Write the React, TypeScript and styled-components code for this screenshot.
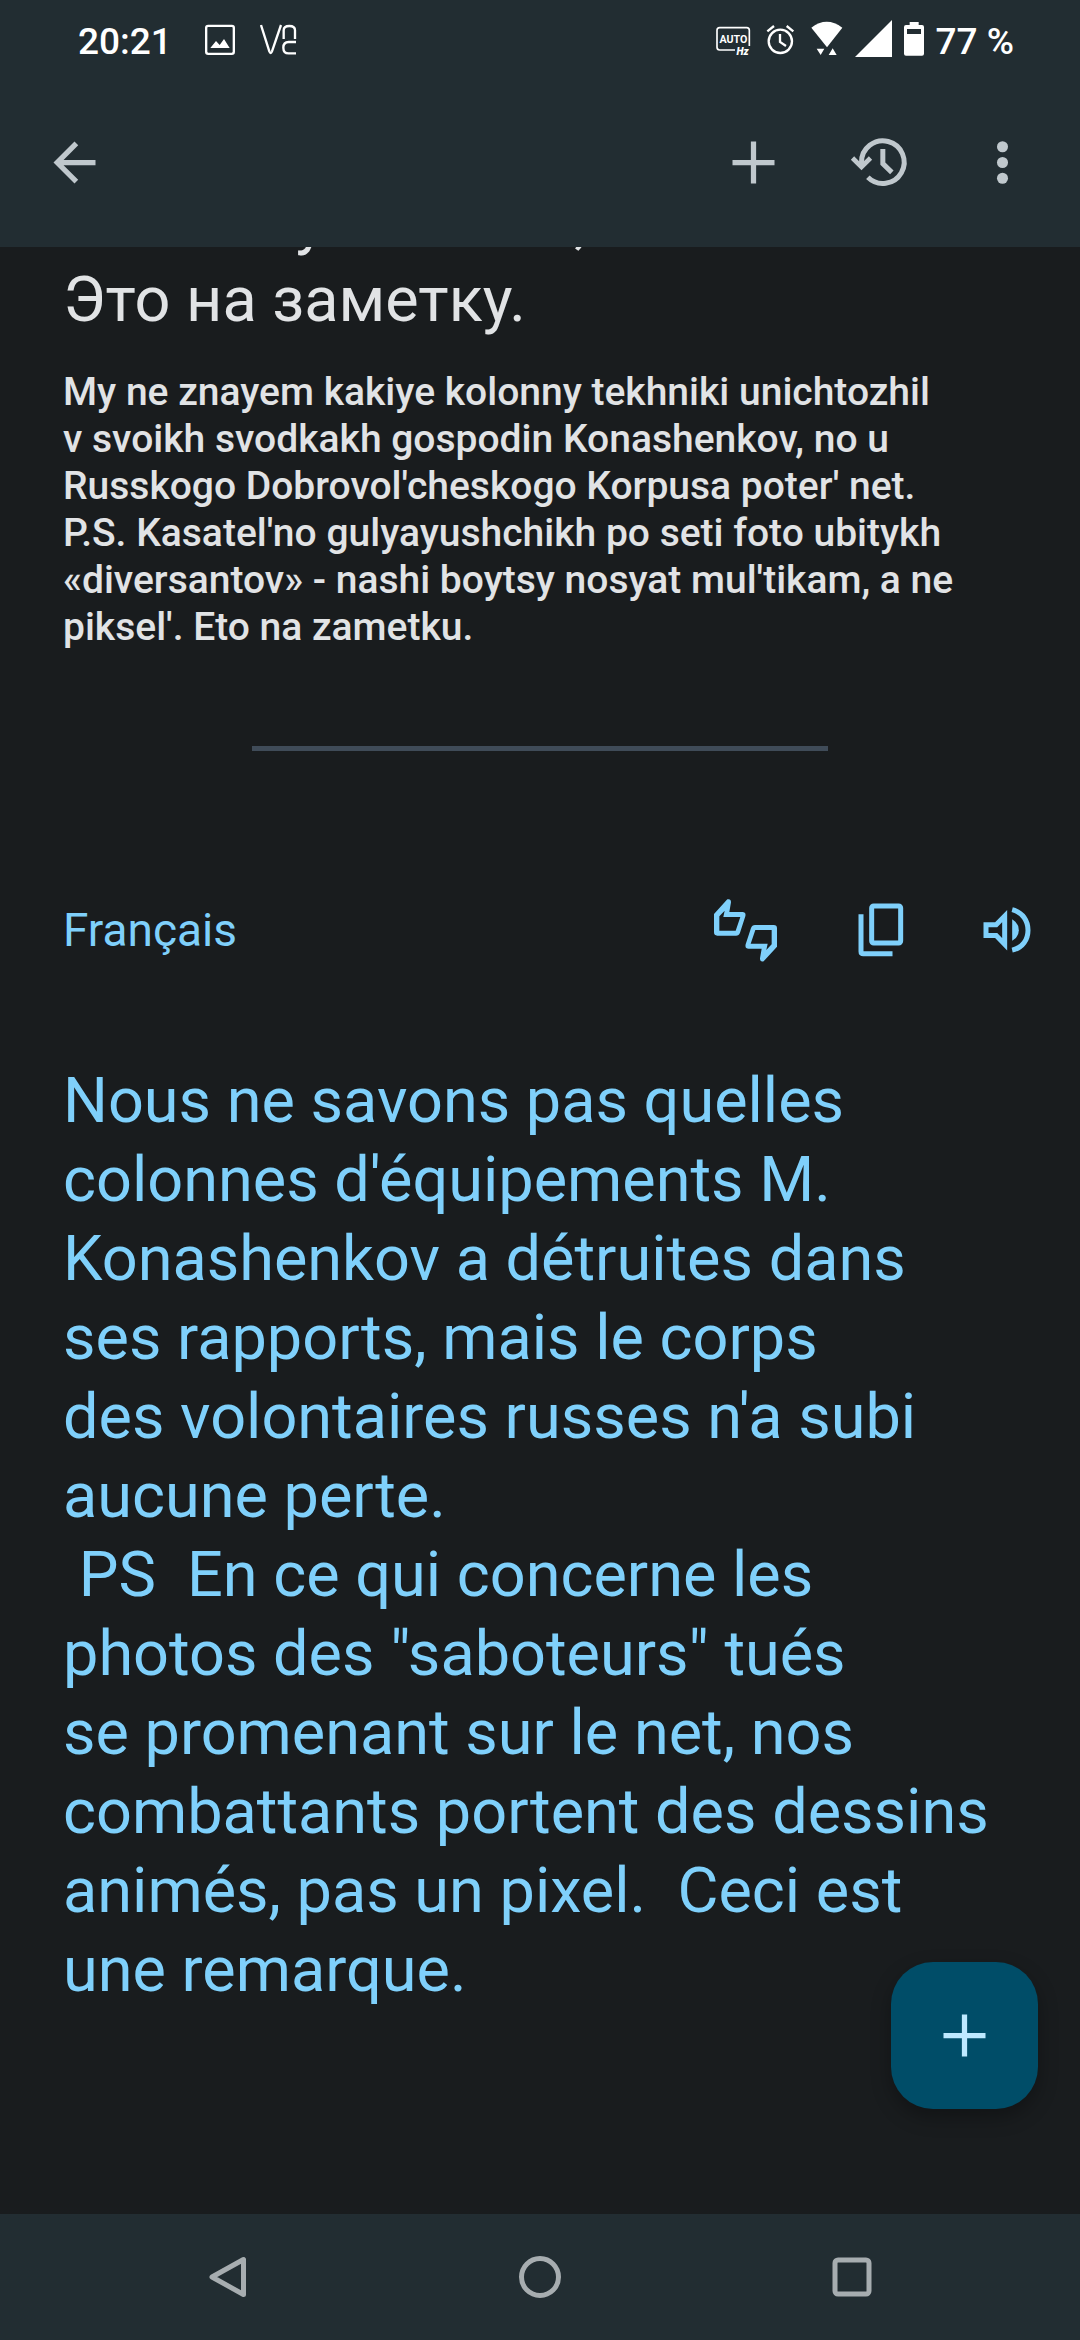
import React from "react";
import styled, { createGlobalStyle } from "styled-components";

const colors = {
  bar: "#222d32",
  page: "#191c1e",
  text: "#e1e3e5",
  icon: "#c0c8cd",
  accent: "#7fd0fb",
  divider: "#3f4b58",
  fab: "#004d68",
  fabIcon: "#bee9ff",
  nav: "#a7adb0",
  status: "#ffffff",
};

const GlobalStyle = createGlobalStyle`
  * { box-sizing: border-box; }
  body {
    margin: 0;
    background: ${colors.page};
    font-family: Roboto, "Noto Sans", sans-serif;
  }
`;

const Screen = styled.div`
  display: flex;
  flex-direction: column;
  min-height: 100vh;
  background: ${colors.page};
  color: ${colors.text};
`;

const Header = styled.header`
  position: sticky;
  top: 0;
  z-index: 1;
  padding-bottom: 6px;
  background: ${colors.bar};
`;

const StatusBar = styled.div`
  display: flex;
  align-items: center;
  justify-content: space-between;
  height: 83px;
  padding: 0 66px 0 78px;
  color: ${colors.status};
  font-size: 37px;
  font-weight: 500;
  line-height: 44px;
`;

const StatusGroup = styled.div<{ $gap: number }>`
  display: flex;
  align-items: center;
  gap: ${(p) => p.$gap}px;
`;

const StatusTime = styled.time`
  margin-right: 8px;
`;

const Toolbar = styled.div`
  display: flex;
  align-items: center;
  justify-content: space-between;
  height: 158px;
  padding: 0 18px 0 11px;
`;

const ButtonGroup = styled.div`
  display: flex;
  align-items: center;
`;

const IconButton = styled.button<{ $width?: number }>`
  display: flex;
  align-items: center;
  justify-content: center;
  width: ${(p) => p.$width ?? 126}px;
  height: 126px;
  padding: 0;
  border: 0;
  background: none;
  color: inherit;
`;

const ToolbarButton = styled(IconButton)`
  color: ${colors.icon};
`;

const Main = styled.main`
  flex: 1;
  display: flex;
  flex-direction: column;
  overflow: hidden;
`;

const Passage = styled.p`
  margin: 0;
  padding: 0 24px 0 63px;
  font-size: 63px;
  line-height: 79px;
  white-space: pre-wrap;
`;

/* The source text is scrolled partly under the header. */
const SourceText = styled(Passage)`
  margin-top: -66px;
`;

const Transliteration = styled.p`
  margin: 30px 0 0;
  padding: 0 24px 0 63px;
  font-size: 39px;
  font-weight: 500;
  line-height: 47px;
  white-space: pre-wrap;
`;

const Divider = styled.hr`
  width: calc(100% - 504px);
  height: 5px;
  margin: 95px auto 0;
  border: 0;
  background: ${colors.divider};
`;

const Translation = styled.section`
  margin-top: 116px;
  padding-bottom: 120px;
  color: ${colors.accent};
`;

const TranslationHeader = styled.div`
  display: flex;
  align-items: center;
  justify-content: space-between;
  margin-bottom: 68px;
  padding: 0 11px 0 63px;
`;

const Language = styled.h2`
  margin: 0;
  font-size: 46px;
  font-weight: 400;
  line-height: 56px;
`;

const Fab = styled.button`
  position: fixed;
  right: 42px;
  bottom: 231px;
  z-index: 2;
  display: flex;
  align-items: center;
  justify-content: center;
  width: 147px;
  height: 147px;
  padding: 0;
  border: 0;
  border-radius: 42px;
  background: ${colors.fab};
  color: ${colors.fabIcon};
  box-shadow: 0 8px 20px rgba(0, 0, 0, 0.3);
`;

const NavBar = styled.nav`
  position: sticky;
  bottom: 0;
  display: flex;
  justify-content: center;
  background: ${colors.bar};
  color: ${colors.nav};
`;

const PlusIcon = () => (
  <svg width="63" height="63" viewBox="0 0 24 24" fill="currentColor" aria-hidden="true">
    <path d="M20 13h-7v7h-2v-7H4v-2h7V4h2v7h7z" />
  </svg>
);

const BackIcon = () => (
  <svg width="63" height="63" viewBox="0 0 24 24" fill="currentColor" aria-hidden="true">
    <path d="M20 11H7.83l5.59-5.59L12 4l-8 8 8 8 1.41-1.41L7.83 13H20z" />
  </svg>
);

const HistoryIcon = () => (
  <svg width="63" height="63" viewBox="472.5 60 189 189" fill="none" stroke="currentColor" strokeWidth="15" aria-hidden="true">
    <path d="M513 166V154A64 64 0 1 1 532 199" />
    <path d="M486 141l27 27 27-27" strokeWidth="14" />
    <path d="M577 114v44l27 26" />
  </svg>
);

const MoreIcon = () => (
  <svg width="63" height="63" viewBox="0 0 24 24" fill="currentColor" aria-hidden="true">
    <circle cx="12" cy="6" r="2.1" />
    <circle cx="12" cy="12" r="2.1" />
    <circle cx="12" cy="18" r="2.1" />
  </svg>
);

const thumb =
  "M102 130L142 86Q153 83 153 95L148 124H187Q199 124 196 137L180 186Q177 195 168 195H112Q102 195 102 185ZM118 137V180H167L181 139H130L134 120Z";

const ThumbsIcon = () => (
  <svg width="63" height="63" viewBox="102 85 189 189" fill="currentColor" fillRule="evenodd" aria-hidden="true">
    <path d={thumb} />
    <path d={thumb} transform="rotate(180 196.5 179)" />
  </svg>
);

const CopyIcon = () => (
  <svg width="63" height="63" viewBox="505.5 85.5 189 189" fill="none" stroke="currentColor" strokeWidth="15" aria-hidden="true">
    <rect x="573.5" y="106.5" width="87" height="111" rx="6" />
    <path d="M541.5 131v112q0 7 7 7H636" />
  </svg>
);

const SpeakerIcon = () => (
  <svg width="63" height="63" viewBox="883.5 85.5 189 189" fill="none" stroke="currentColor" strokeWidth="15" aria-hidden="true">
    <path d="M916.5 162.5H947l25.5-26v85l-25.5-26.5h-30.5z" />
    <path d="M995 146q20 12 20 33t-20 32z" fill="currentColor" stroke="none" />
    <path d="M995 117.5c32 8 47.5 34 47.5 61.5s-15.5 53-47.5 60" />
  </svg>
);

const PictureIcon = () => (
  <svg width="30" height="45" viewBox="432 57 90 135" fill="none" stroke="currentColor" aria-hidden="true">
    <rect x="435.5" y="77.5" width="83" height="84" rx="6" strokeWidth="7" />
    <path d="M448 144l17-21 11 12 13-18 17 27z" fill="currentColor" stroke="none" />
  </svg>
);

const MonogramIcon = () => (
  <svg width="37" height="45" viewBox="597 57 111 135" fill="none" stroke="currentColor" strokeWidth="7" aria-hidden="true">
    <path d="M600 75l25 79q4 10 8 0l27-79" />
    <path d="M668 117V91q0-13 17-13t17 13v26" />
    <path d="M705 126h-22q-16 0-16 17t16 17h22" />
  </svg>
);

const AutoHzIcon = () => (
  <svg width="35" height="45" viewBox="75 57 105 135" aria-hidden="true">
    <path d="M132 150H86q-8 0-8-8V91q0-8 8-8h81q8 0 8 8v47" fill="none" stroke="currentColor" strokeWidth="5" />
    <g fill="currentColor" fontFamily="Roboto, sans-serif">
      <text x="127" y="128" fontSize="32" fontWeight="700" textAnchor="middle">AUTO</text>
      <text x="155" y="165" fontSize="31" fontWeight="900" fontStyle="italic" textAnchor="middle">Hz</text>
    </g>
  </svg>
);

const AlarmIcon = () => (
  <svg width="35" height="45" viewBox="216 57 105 135" fill="none" stroke="currentColor" strokeWidth="7" aria-hidden="true">
    <circle cx="268" cy="124" r="35" />
    <path d="M229 94l20-16M307 94l-20-16M267 102v24l18 12" />
  </svg>
);

const WifiIcon = () => (
  <svg width="33" height="45" viewBox="359 57 99 135" fill="currentColor" aria-hidden="true">
    <path d="M363 83q46-35 93 0l-46 59z" />
    <path d="M379 146h23l-11 19zM415 165h24l-12-20z" />
  </svg>
);

const SignalIcon = () => (
  <svg width="37" height="45" viewBox="492 57 111 135" fill="currentColor" aria-hidden="true">
    <path d="M603 60v111H492z" />
  </svg>
);

const BatteryIcon = () => (
  <svg width="20" height="45" viewBox="639 57 60 135" fill="currentColor" fillRule="evenodd" aria-hidden="true">
    <path d="M656 66h27v9h10q6 0 6 6v80q0 6-6 6h-48q-6 0-6-6V81q0-6 6-6h11zM648 87v15h42V87z" />
  </svg>
);

const NavIcon = ({ children }: { children: React.ReactNode }) => (
  <svg width="48" height="48" viewBox="0 0 48 48" fill="none" stroke="currentColor" strokeWidth="5" strokeLinejoin="round" aria-hidden="true">
    {children}
  </svg>
);

const source = "носят мультикам, а не пиксель.\nЭто на заметку.";

const transliteration = [
  "My ne znayem kakiye kolonny tekhniki unichtozhil",
  "v svoikh svodkakh gospodin Konashenkov, no u",
  "Russkogo Dobrovol'cheskogo Korpusa poter' net.",
  "P.S. Kasatel'no gulyayushchikh po seti foto ubitykh",
  "«diversantov» - nashi boytsy nosyat mul'tikam, a ne",
  "piksel'. Eto na zametku.",
].join("\n");

const translation = [
  "Nous ne savons pas quelles",
  "colonnes d'équipements M.",
  "Konashenkov a détruites dans",
  "ses rapports, mais le corps",
  "des volontaires russes n'a subi",
  "aucune perte.",
  " PS  En ce qui concerne les",
  "photos des \"saboteurs\" tués",
  "se promenant sur le net, nos",
  "combattants portent des dessins",
  "animés, pas un pixel.  Ceci est",
  "une remarque.",
].join("\n");

export default function App() {
  return (
    <Screen>
      <GlobalStyle />
      <Header>
        <StatusBar>
          <StatusGroup $gap={25}>
            <StatusTime>20:21</StatusTime>
            <PictureIcon />
            <MonogramIcon />
          </StatusGroup>
          <StatusGroup $gap={12}>
            <AutoHzIcon />
            <AlarmIcon />
            <WifiIcon />
            <SignalIcon />
            <BatteryIcon />
            <span>77 %</span>
          </StatusGroup>
        </StatusBar>
        <Toolbar>
          <ToolbarButton aria-label="Retour">
            <BackIcon />
          </ToolbarButton>
          <ButtonGroup>
            <ToolbarButton aria-label="Nouvelle traduction">
              <PlusIcon />
            </ToolbarButton>
            <ToolbarButton aria-label="Historique">
              <HistoryIcon />
            </ToolbarButton>
            <ToolbarButton aria-label="Plus d'options" $width={120}>
              <MoreIcon />
            </ToolbarButton>
          </ButtonGroup>
        </Toolbar>
      </Header>

      <Main>
        <SourceText lang="ru">{source}</SourceText>
        <Transliteration>{transliteration}</Transliteration>
        <Divider />
        <Translation lang="fr">
          <TranslationHeader>
            <Language>Français</Language>
            <ButtonGroup>
              <IconButton aria-label="Évaluer la traduction" $width={144}>
                <ThumbsIcon />
              </IconButton>
              <IconButton aria-label="Copier">
                <CopyIcon />
              </IconButton>
              <IconButton aria-label="Écouter">
                <SpeakerIcon />
              </IconButton>
            </ButtonGroup>
          </TranslationHeader>
          <Passage>{translation}</Passage>
        </Translation>
      </Main>

      <Fab aria-label="Nouvelle traduction">
        <PlusIcon />
      </Fab>

      <NavBar>
        <IconButton aria-label="Retour" $width={312}>
          <NavIcon>
            <path d="M8 24L39.5 6.5v35z" />
          </NavIcon>
        </IconButton>
        <IconButton aria-label="Accueil" $width={312}>
          <NavIcon>
            <circle cx="24" cy="24" r="18.5" />
          </NavIcon>
        </IconButton>
        <IconButton aria-label="Applications récentes" $width={312}>
          <NavIcon>
            <rect x="7" y="7" width="34" height="34" rx="3" />
          </NavIcon>
        </IconButton>
      </NavBar>
    </Screen>
  );
}
